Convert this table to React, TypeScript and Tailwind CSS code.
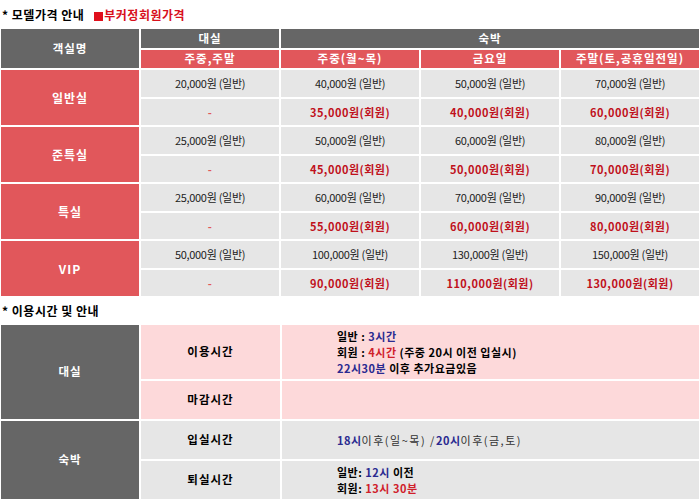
import React from "react";

const rooms = [
  {
    name: "일반실",
    normal: ["20,000원 (일반)", "40,000원 (일반)", "50,000원 (일반)", "70,000원 (일반)"],
    member: ["35,000원(회원)", "40,000원(회원)", "60,000원(회원)"],
  },
  {
    name: "준특실",
    normal: ["25,000원 (일반)", "50,000원 (일반)", "60,000원 (일반)", "80,000원 (일반)"],
    member: ["45,000원(회원)", "50,000원(회원)", "70,000원(회원)"],
  },
  {
    name: "특실",
    normal: ["25,000원 (일반)", "60,000원 (일반)", "70,000원 (일반)", "90,000원 (일반)"],
    member: ["55,000원(회원)", "60,000원(회원)", "80,000원(회원)"],
  },
  {
    name: "VIP",
    normal: ["50,000원 (일반)", "100,000원 (일반)", "130,000원 (일반)", "150,000원 (일반)"],
    member: ["90,000원(회원)", "110,000원(회원)", "130,000원(회원)"],
  },
];

function SectionTitle({ children }: { children: React.ReactNode }) {
  return (
    <div className="h-[29px] flex items-center pl-[2px] text-[12px] font-bold text-black tracking-[0.5px]">
      {children}
    </div>
  );
}

export default function App() {
  return (
    <main
      className="w-[700px] bg-white text-[12px] text-black overflow-hidden"
      style={{ fontFamily: '"Noto Sans CJK KR", "Noto Sans", sans-serif' }}
    >
      {/* 가격 안내 */}
      <SectionTitle>
        <span>* 모델가격 안내</span>
        <span className="ml-[10px] text-[#d8101c]">
          <span className="inline-block w-[9px] h-[9px] bg-[#e0101c] mr-[1px] align-[-1px]" />
          부커정회원가격
        </span>
      </SectionTitle>

      <table className="-ml-[1px] w-[702px] border-separate border-spacing-[2px] -my-[2px] table-fixed text-center">
        <thead>
          <tr className="h-[19px] bg-[#666666] text-white font-bold tracking-[1px] text-[11.5px]">
            <th rowSpan={2} className="font-bold">
              객실명
            </th>
            <th className="font-bold">대실</th>
            <th colSpan={3} className="font-bold">
              숙박
            </th>
          </tr>
          <tr className="h-[18px] bg-[#e1575b] text-white tracking-[1px] text-[11.5px]">
            <th className="font-bold">주중,주말</th>
            <th className="font-bold">주중(월~목)</th>
            <th className="font-bold">금요일</th>
            <th className="font-bold">주말(토,공휴일전일)</th>
          </tr>
        </thead>
        <tbody>
          {rooms.map((r) => (
            <React.Fragment key={r.name}>
              <tr className="h-[27px] bg-[#e6e6e6] text-[#222] text-[11px] tracking-[-0.3px]">
                <td rowSpan={2} className="bg-[#e1575b] text-white font-bold text-[12px] tracking-[1px]">
                  {r.name}
                </td>
                {r.normal.map((p, i) => (
                  <td key={i}>{p}</td>
                ))}
              </tr>
              <tr className="h-[26px] bg-[#e6e6e6] font-bold text-[#c0111c] text-[11px] tracking-[0.5px]">
                <td className="text-[#e1575b]">-</td>
                {r.member.map((p, i) => (
                  <td key={i}>{p}</td>
                ))}
              </tr>
            </React.Fragment>
          ))}
        </tbody>
      </table>

      {/* 이용시간 */}
      <SectionTitle>* 이용시간 및 안내</SectionTitle>

      <table className="-ml-[1px] w-[702px] border-separate border-spacing-[2px] -mt-[2px] table-fixed font-bold tracking-[1px] text-[11.5px]">
        <colgroup>
          <col className="w-[138px]" />
          <col className="w-[139px]" />
          <col />
        </colgroup>
        <tbody>
          <tr className="h-[54px] bg-[#fdd9da]">
            <td rowSpan={2} className="bg-[#666666] text-white text-center">
              대실
            </td>
            <td className="text-center">이용시간</td>
            <td className="pl-[55px] text-[11px] leading-[16px] tracking-[0.5px]">
              <div>
                일반 : <span className="text-[#2a2a90]">3시간</span>
              </div>
              <div>
                회원 : <span className="text-[#d0202a]">4시간</span> (주중 20시 이전 입실시)
              </div>
              <div>
                <span className="text-[#2a2a90]">22시30분</span> 이후 추가요금있음
              </div>
            </td>
          </tr>
          <tr className="h-[38px] bg-[#fdd9da]">
            <td className="text-center">마감시간</td>
            <td></td>
          </tr>
          <tr className="h-[38px] bg-[#e6e6e6]">
            <td rowSpan={2} className="bg-[#666666] text-white text-center">
              숙박
            </td>
            <td className="text-center">입실시간</td>
            <td className="pl-[55px] text-[11px] tracking-[0.5px]">
              <span className="text-[#2a2a90]">18시</span>
              <span className="font-normal text-[#333] tracking-[1.5px]">이후(일~목) /</span>
              <span className="text-[#2a2a90]">20시</span>
              <span className="font-normal text-[#333] tracking-[1.5px]">이후(금,토)</span>
            </td>
          </tr>
          <tr className="h-[38px] bg-[#e6e6e6]">
            <td className="text-center">퇴실시간</td>
            <td className="pl-[55px] text-[11px] leading-[16px] tracking-[0.5px]">
              <div>
                일반: <span className="text-[#2a2a90]">12시</span> 이전
              </div>
              <div>
                회원: <span className="text-[#d0202a]">13시 30분</span>
              </div>
            </td>
          </tr>
        </tbody>
      </table>
    </main>
  );
}
